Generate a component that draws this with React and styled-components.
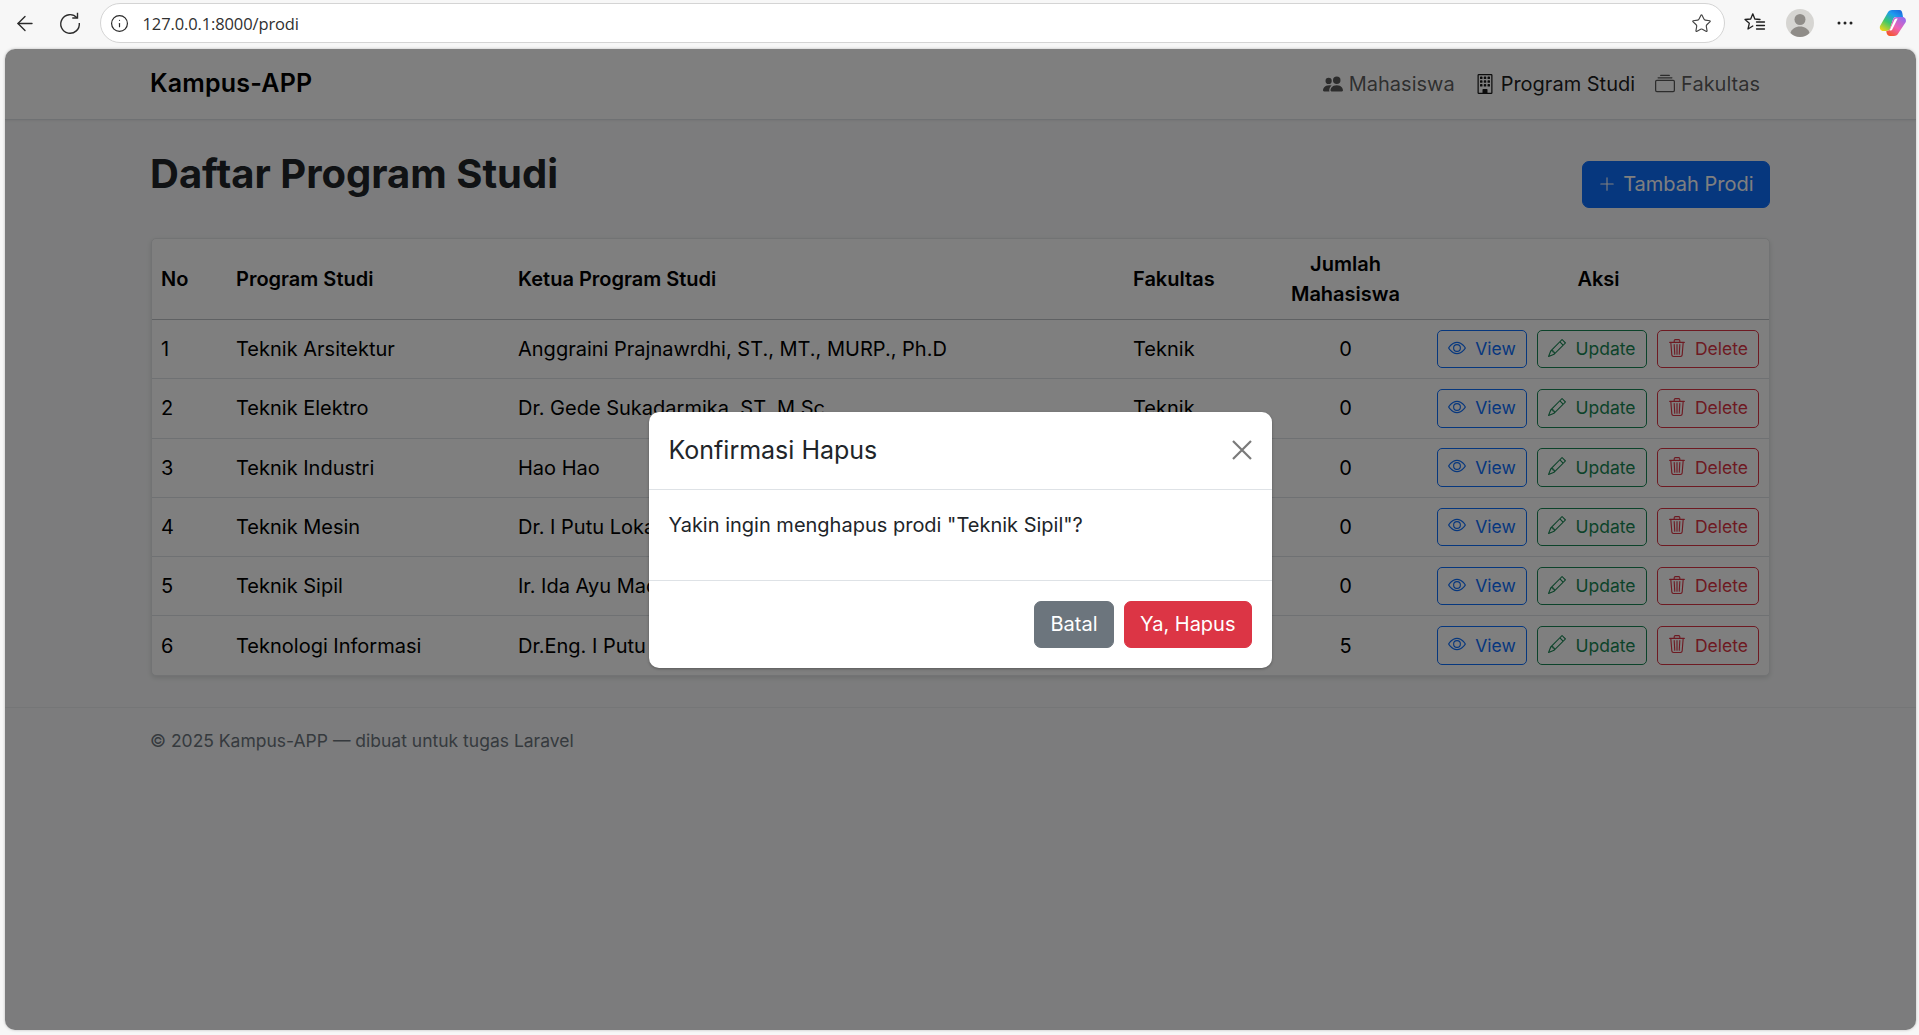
import React from 'react';
import styled, { createGlobalStyle } from 'styled-components';
import { ArrowLeft, Info, Star } from 'lucide-react';
import { BsPeopleFill, BsBuilding, BsCollection, BsEye, BsPencil, BsTrash3, BsPlusLg } from 'react-icons/bs';

const Global = createGlobalStyle`
  html, body { margin: 0; padding: 0; height: 100%; }
  body { font-family: Inter, "Liberation Sans", sans-serif; background: #f7f7f7; color: #212529; overflow: hidden; }
  * { box-sizing: border-box; }
`;

const Shell = styled.div`
  width: 1919px; height: 1035px; display: flex; flex-direction: column; background: #f7f7f7;
`;
const ChromeBar = styled.div`
  height: 49px; flex: none; display: flex; align-items: center; padding: 0 0 3px 13px;
`;
const ToolBtn = styled.span`
  display: inline-flex; align-items: center; justify-content: center; flex: none;
  width: ${p => p.$w || 24}px; margin-left: ${p => p.$ml || 0}px; color: #2b2b2b;
`;
const AddressBar = styled.div`
  width: 1625px; height: 40px; flex: none; margin-left: 18px; display: flex; align-items: center;
  padding: 0 10.5px 0 8.5px; background: #fff; border: 1.5px solid #d4d4d4; border-radius: 20px;
`;
const Url = styled.span`
  flex: 1; margin-left: 13px; font-family: "Open Sans", sans-serif; font-size: 16.5px; color: #303030; letter-spacing: -0.12px;
`;
const Window = styled.div`
  position: relative; flex: 1; margin: 0 3px 5px 5px; border-radius: 10px; overflow: hidden;
  background: #f8f9fa; display: flex; flex-direction: column; box-shadow: 0 0 3px rgba(0,0,0,.25);
`;
const Nav = styled.nav`
  height: 71px; flex: none; background: #fff; border-bottom: 1px solid #dee2e6;
  display: flex; align-items: center; justify-content: space-between; padding: 0 146px 0 145px;
  box-shadow: 0 1px 2px rgba(0,0,0,.06);
`;
const Brand = styled.span`font-size: 25px; font-weight: 600; color: #000; margin-top: -2px; letter-spacing: 0.2px;`;
const NavLinks = styled.div`display: flex; align-items: center;`;
const NavLink = styled.span`
  display: inline-flex; align-items: center; gap: 6px; padding: 0 10px; font-size: 20px;
  color: ${p => (p.$active ? 'rgba(0,0,0,.9)' : 'rgba(0,0,0,.65)')};
`;
const Main = styled.main`padding: 29px 146px 0; display: flex; flex-direction: column;`;
const TitleRow = styled.div`display: flex; justify-content: space-between; align-items: flex-end; margin-bottom: 30px;`;
const Title = styled.h1`margin: 0 0 10px -1px; font-size: 40px; line-height: 49px; font-weight: 700; color: #212529;`;
const Btn = styled.button`
  display: inline-flex; align-items: center; justify-content: center; height: 47px;
  padding: 0 ${p => p.$px || 15}px 1px;
  border: 1px solid ${p => p.$bg}; border-radius: 7px; background: ${p => p.$bg}; color: #fff;
  font: 400 20px Inter, sans-serif; gap: ${p => p.$gap || 0}px;
`;
const Card = styled.div`
  background: #fff; border: 1px solid #e4e6e8; border-radius: 5px; overflow: hidden;
  box-shadow: 0 2px 5px rgba(0,0,0,.12);
`;
const Table = styled.table`
  width: 100%; border-collapse: collapse; table-layout: fixed; font-size: 20px; line-height: 30px;
`;
const Th = styled.th`
  padding: 10px 10px 10px 9px; height: 80px; font-weight: 600; color: #000; text-align: ${p => p.$center ? 'center' : 'left'};
  vertical-align: middle; border-bottom: 1px solid #bfc3c7;
`;
const Tr = styled.tr`
  height: 59.25px;
  & + & td { border-top: 1px solid #dee2e6; }
`;
const Td = styled.td`
  padding: 0 10px 0 9px; color: #000; vertical-align: middle; white-space: nowrap; overflow: hidden;
  text-align: ${p => p.$center ? 'center' : 'left'};
`;
const Actions = styled.div`display: flex; gap: 10px; padding-left: 1px;`;
const SmallBtn = styled.button`
  display: inline-flex; align-items: center; justify-content: center; gap: 9px; height: 38.5px;
  width: ${p => p.$w}px; padding: 0 0 1px; background: transparent; border: 1px solid ${p => p.$c}; color: ${p => p.$c};
  border-radius: 5px; font: 400 17.5px Inter, sans-serif;
  svg { transform: translateY(-1px); }
`;
const Footer = styled.footer`
  margin-top: 31px; border-top: 1px solid #eaecee; padding: 20px 146px 20px 145px; font-size: 17.5px; line-height: 26px; color: #6c757d;
`;
const Backdrop = styled.div`
  position: absolute; inset: 0; background: rgba(0,0,0,.5); display: flex; align-items: center; justify-content: center;
`;
const Modal = styled.div`
  width: 623px; background: #fff; border-radius: 10px; box-shadow: 0 1px 3px rgba(0,0,0,.3);
  overflow: hidden; display: flex; flex-direction: column;
`;
const ModalHead = styled.div`
  height: 78px; display: flex; align-items: center; justify-content: space-between; padding: 0 20px 0 19.5px; border-bottom: 1px solid #dee2e6;
`;
const ModalTitle = styled.h5`margin: 0; font-size: 25px; font-weight: 400; color: #212529;`;
const Close = styled.span`display: inline-flex; color: #7a7a7a;`;
const ModalBody = styled.div`height: 90px; padding: 20px 20px 20px 19.5px; font-size: 20px; line-height: 30px; color: #212529;`;
const ModalFoot = styled.div`
  height: 88px; padding: 20px; display: flex; justify-content: flex-end; gap: 10px; border-top: 1px solid #dee2e6;
`;

const rows = [
  ['Teknik Arsitektur', 'Anggraini Prajnawrdhi, ST., MT., MURP., Ph.D', 0],
  ['Teknik Elektro', 'Dr. Gede Sukadarmika, ST.,M.Sc.', 0],
  ['Teknik Industri', 'Hao Hao', 0],
  ['Teknik Mesin', 'Dr. I Putu Lokantara, ST., MT.', 0],
  ['Teknik Sipil', 'Ir. Ida Ayu Made Budiwati', 0],
  ['Teknologi Informasi', 'Dr.Eng. I Putu Agung Bayupati', 5],
];

const Reload = () => (
  <svg width="24" height="24" viewBox="0 0 24 24" fill="none" stroke="#2b2b2b" strokeWidth="1.4">
    <path d="M19 6.800A9.300 9.300 0 1 0 21.300 12" />
    <path d="M19.500 1.800v5.200h-5.200" />
  </svg>
);
const FavIcon = () => (
  <svg width="24" height="24" viewBox="0 0 24 24" fill="none" stroke="#1f1f1f" strokeWidth="1.3" strokeLinejoin="round" strokeLinecap="round">
    <path d="M17 8.500L11.800 8 9.800 2.800 7.700 8 2 8.500l4.300 3.800L5 18l4.800-3" />
    <path d="M13.500 11h8M13.500 14.500h8M13.500 18h8" />
  </svg>
);
const Avatar = () => (
  <svg width="28" height="28" viewBox="0 0 28 28">
    <circle cx="14" cy="14" r="14" fill="#d6d5d2" />
    <circle cx="14" cy="10.500" r="5.500" fill="#8f8c88" />
    <path d="M4.500 24c1-4 5-6.500 9.500-6.500s8.500 2.500 9.500 6.500c-2.500 2.500-6 4-9.500 4s-7-1.500-9.500-4z" fill="#8f8c88" />
  </svg>
);
const Dots = () => (
  <svg width="16" height="4" viewBox="0 0 16 4" fill="#222">
    <circle cx="2" cy="2" r="1.500" /><circle cx="8" cy="2" r="1.500" /><circle cx="14" cy="2" r="1.500" />
  </svg>
);
const Copilot = () => (
  <svg width="28" height="26" viewBox="0 0 28 26">
    <defs>
      <linearGradient id="cpA" x1="0.1" y1="1" x2="0.8" y2="0">
        <stop offset="0" stopColor="#f7d613" /><stop offset=".4" stopColor="#3cc76a" /><stop offset=".75" stopColor="#1d9cf0" /><stop offset="1" stopColor="#1b6fe0" />
      </linearGradient>
      <linearGradient id="cpB" x1="0.9" y1="0" x2="0.2" y2="1">
        <stop offset="0" stopColor="#8d6cf2" /><stop offset=".55" stopColor="#ee62b4" /><stop offset="1" stopColor="#f4552a" />
      </linearGradient>
    </defs>
    <path d="M8.500 3C9.300 1 11 0 13 0h7.500c2 0 2.500 1.500 3 4l.5 3H17c-1.500 0-2.300.7-2.800 2L11 18.500C10.300 20.300 9 21 7 21H4.500C1.500 21 .3 18.500 1 16z" fill="url(#cpA)" />
    <path d="M19.500 23c-.8 2-2.500 3-4.500 3H11c-2 0-3-1.200-3.500-3.500L7.300 21h.7c1.500 0 2.300-.7 2.800-2L14 9.500C14.700 7.700 16 7 18 7h5.500c2.500 0 4 2.500 3.300 5z" fill="url(#cpB)" />
    <path d="M17.500 8.500h1.200L13.500 19c-.4 1-1.200 1.500-2.300 1.500h-.7l4.700-10.200c.5-1 1.200-1.800 2.300-1.800z" fill="#fff" />
  </svg>
);

export default function App() {
  return (
    <>
      <Global />
      <Shell>
        <ChromeBar>
          <ToolBtn><ArrowLeft size={25} strokeWidth={1.35} /></ToolBtn>
          <ToolBtn $ml={21}><Reload /></ToolBtn>
          <AddressBar>
            <ToolBtn $w={20}><Info size={19} strokeWidth={1.5} /></ToolBtn>
            <Url>127.0.0.1:8000/prodi</Url>
            <ToolBtn><Star size={21} strokeWidth={1.3} color="#444" /></ToolBtn>
          </AddressBar>
          <ToolBtn $ml={18}><FavIcon /></ToolBtn>
          <ToolBtn $w={28} $ml={19}><Avatar /></ToolBtn>
          <ToolBtn $w={20} $ml={21}><Dots /></ToolBtn>
          <ToolBtn $w={28} $ml={24}><Copilot /></ToolBtn>
        </ChromeBar>
        <Window>
          <Nav>
            <Brand>Kampus-APP</Brand>
            <NavLinks>
              <NavLink><BsPeopleFill size={20} /> Mahasiswa</NavLink>
              <NavLink $active><BsBuilding size={20} /> Program Studi</NavLink>
              <NavLink><BsCollection size={20} /> Fakultas</NavLink>
            </NavLinks>
          </Nav>
          <Main>
            <TitleRow>
              <Title>Daftar Program Studi</Title>
              <Btn $bg="#0d6efd" $gap={7} $px={15.5}><BsPlusLg size={18} /> Tambah Prodi</Btn>
            </TitleRow>
            <Card>
              <Table>
                <colgroup>
                  <col style={{ width: 75 }} /><col style={{ width: 282 }} /><col style={{ width: 615 }} />
                  <col style={{ width: 141 }} /><col style={{ width: 162 }} /><col style={{ width: 344 }} />
                </colgroup>
                <thead>
                  <tr>
                    <Th>No</Th><Th>Program Studi</Th><Th>Ketua Program Studi</Th><Th>Fakultas</Th>
                    <Th $center>Jumlah Mahasiswa</Th><Th $center>Aksi</Th>
                  </tr>
                </thead>
                <tbody>
                  {rows.map((r, i) => (
                    <Tr key={r[0]}>
                      <Td>{i + 1}</Td><Td>{r[0]}</Td><Td>{r[1]}</Td><Td>Teknik</Td>
                      <Td $center>{r[2]}</Td>
                      <Td>
                        <Actions>
                          <SmallBtn $c="#0d6efd" $w={90}><BsEye size={18} /> View</SmallBtn>
                          <SmallBtn $c="#198754" $w={110}><BsPencil size={18} /> Update</SmallBtn>
                          <SmallBtn $c="#dc3545" $w={102}><BsTrash3 size={18} /> Delete</SmallBtn>
                        </Actions>
                      </Td>
                    </Tr>
                  ))}
                </tbody>
              </Table>
            </Card>
          </Main>
          <Footer>© 2025 Kampus-APP — dibuat untuk tugas Laravel</Footer>
          <Backdrop>
            <Modal>
              <ModalHead>
                <ModalTitle>Konfirmasi Hapus</ModalTitle>
                <Close>
                  <svg width="20" height="20" viewBox="0 0 20 20" stroke="currentColor" strokeWidth="2.200"><path d="M1 1l18 18M19 1L1 19" /></svg>
                </Close>
              </ModalHead>
              <ModalBody>Yakin ingin menghapus prodi "Teknik Sipil"?</ModalBody>
              <ModalFoot>
                <Btn $bg="#6c757d">Batal</Btn>
                <Btn $bg="#dc3545" $px={15.5}>Ya, Hapus</Btn>
              </ModalFoot>
            </Modal>
          </Backdrop>
        </Window>
      </Shell>
    </>
  );
}
